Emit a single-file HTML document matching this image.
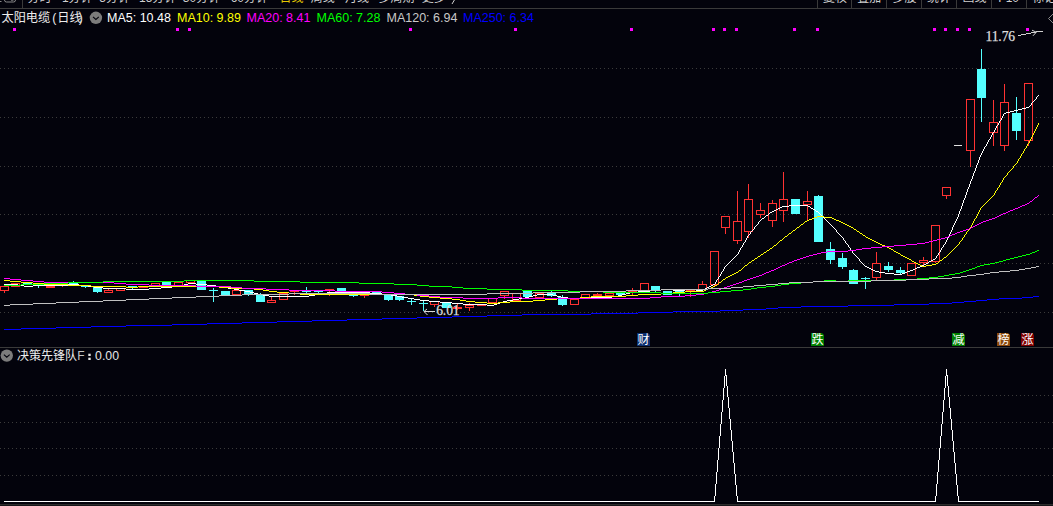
<!DOCTYPE html><html><head><meta charset="utf-8"><title>chart</title><style>
html,body{margin:0;padding:0;background:#03030c;}body{width:1053px;height:506px;overflow:hidden;position:relative;font-family:"Liberation Sans",sans-serif;}
svg{position:absolute;left:0;top:0;display:block}
.t{font-family:"Liberation Sans",sans-serif;font-size:12.5px}
.s{font-family:"Liberation Serif",serif;font-size:13.6px;fill:#dedede;stroke:#dedede;stroke-width:0.25px;letter-spacing:-0.12px}
.c{font-family:"Liberation Sans","Noto Sans CJK SC",sans-serif;font-size:12px}
</style></head><body>
<svg width="1053" height="506" viewBox="0 0 1053 506">
<rect width="1053" height="506" fill="#03030c"/>
<g stroke="#3b3b3b" stroke-width="1" stroke-dasharray="1 3" shape-rendering="crispEdges">
<line x1="0" y1="68.5" x2="1053" y2="68.5"/>
<line x1="0" y1="117.5" x2="1053" y2="117.5"/>
<line x1="0" y1="166.5" x2="1053" y2="166.5"/>
<line x1="0" y1="214.5" x2="1053" y2="214.5"/>
<line x1="0" y1="263.5" x2="1053" y2="263.5"/>
<line x1="0" y1="312.5" x2="1053" y2="312.5"/>
<line x1="0" y1="395.5" x2="1053" y2="395.5"/>
<line x1="0" y1="422.5" x2="1053" y2="422.5"/>
<line x1="0" y1="448.5" x2="1053" y2="448.5"/>
<line x1="0" y1="475.5" x2="1053" y2="475.5"/>
</g>
<g shape-rendering="crispEdges">
<rect x="0" y="8" width="1053" height="1" fill="#3a3a3a"/>
<rect x="0" y="347" width="1053" height="1" fill="#3a3a3a"/>
<rect x="0" y="504" width="1053" height="1" fill="#2c2c2c"/>
<rect x="0" y="505" width="1053" height="1" fill="#17171a"/>
<rect x="22" y="0" width="1" height="8" fill="#3a3a3a"/>
<rect x="817" y="0" width="1" height="8" fill="#3a3a3a"/>
<rect x="851" y="0" width="1" height="8" fill="#3a3a3a"/>
<rect x="886" y="0" width="1" height="8" fill="#3a3a3a"/>
<rect x="921" y="0" width="1" height="8" fill="#3a3a3a"/>
<rect x="956" y="0" width="1" height="8" fill="#3a3a3a"/>
<rect x="991" y="0" width="1" height="8" fill="#3a3a3a"/>
<rect x="1026" y="0" width="1" height="8" fill="#3a3a3a"/>
</g>
<g shape-rendering="crispEdges">
<rect x="4" y="291" width="1" height="2" fill="#ff3232"/>
<rect x="0.5" y="286.5" width="8" height="4" fill="none" stroke="#ff3232" stroke-width="1"/>
<rect x="11.5" y="283.5" width="8" height="3" fill="none" stroke="#ff3232" stroke-width="1"/>
<rect x="23" y="283" width="9" height="2" fill="#54ffff"/>
<rect x="38" y="286" width="1" height="2" fill="#54ffff"/>
<rect x="34" y="285" width="9" height="1" fill="#54ffff"/>
<rect x="46" y="286" width="9" height="2" fill="#ff3232"/>
<rect x="62" y="286" width="1" height="1" fill="#ff3232"/>
<rect x="58" y="284" width="9" height="2" fill="#ff3232"/>
<rect x="73" y="281" width="1" height="2" fill="#54ffff"/>
<rect x="69" y="283" width="9" height="2" fill="#54ffff"/>
<rect x="85" y="287" width="1" height="1" fill="#54ffff"/>
<rect x="81" y="285" width="9" height="2" fill="#54ffff"/>
<rect x="97" y="292" width="1" height="1" fill="#54ffff"/>
<rect x="93" y="286" width="9" height="6" fill="#54ffff"/>
<rect x="108" y="289" width="1" height="1" fill="#ff3232"/>
<rect x="104.5" y="290.5" width="8" height="2" fill="none" stroke="#ff3232" stroke-width="1"/>
<rect x="116.5" y="288.5" width="8" height="2" fill="none" stroke="#ff3232" stroke-width="1"/>
<rect x="132" y="287" width="1" height="2" fill="#54ffff"/>
<rect x="128" y="286" width="9" height="1" fill="#54ffff"/>
<rect x="139" y="286" width="9" height="2" fill="#ff3232"/>
<rect x="151.5" y="283.5" width="8" height="2" fill="none" stroke="#ff3232" stroke-width="1"/>
<rect x="166" y="285" width="1" height="3" fill="#54ffff"/>
<rect x="162" y="282" width="9" height="3" fill="#54ffff"/>
<rect x="174.5" y="282.5" width="8" height="3" fill="none" stroke="#ff3232" stroke-width="1"/>
<rect x="186.5" y="280.5" width="8" height="2" fill="none" stroke="#ff3232" stroke-width="1"/>
<rect x="197" y="281" width="9" height="9" fill="#54ffff"/>
<rect x="213" y="288" width="1" height="2" fill="#54ffff"/>
<rect x="213" y="291" width="1" height="11" fill="#54ffff"/>
<rect x="209" y="290" width="9" height="1" fill="#54ffff"/>
<rect x="221" y="291" width="9" height="4" fill="#54ffff"/>
<rect x="232.5" y="290.5" width="8" height="4" fill="none" stroke="#ff3232" stroke-width="1"/>
<rect x="248" y="294" width="1" height="2" fill="#54ffff"/>
<rect x="244" y="290" width="9" height="4" fill="#54ffff"/>
<rect x="260" y="293" width="1" height="1" fill="#54ffff"/>
<rect x="256" y="294" width="9" height="8" fill="#54ffff"/>
<rect x="271" y="297" width="1" height="3" fill="#ff3232"/>
<rect x="267.5" y="300.5" width="8" height="2" fill="none" stroke="#ff3232" stroke-width="1"/>
<rect x="279.5" y="293.5" width="8" height="6" fill="none" stroke="#ff3232" stroke-width="1"/>
<rect x="294" y="292" width="1" height="3" fill="#ff3232"/>
<rect x="290" y="291" width="9" height="1" fill="#ff3232"/>
<rect x="306" y="287" width="1" height="4" fill="#54ffff"/>
<rect x="306" y="292" width="1" height="1" fill="#54ffff"/>
<rect x="302" y="291" width="9" height="1" fill="#54ffff"/>
<rect x="318" y="292" width="1" height="1" fill="#54ffff"/>
<rect x="314" y="291" width="9" height="1" fill="#54ffff"/>
<rect x="329" y="291" width="1" height="5" fill="#ff3232"/>
<rect x="325" y="289" width="9" height="2" fill="#ff3232"/>
<rect x="337" y="288" width="9" height="3" fill="#54ffff"/>
<rect x="353" y="296" width="1" height="1" fill="#54ffff"/>
<rect x="349" y="293" width="9" height="3" fill="#54ffff"/>
<rect x="364" y="296" width="1" height="2" fill="#ff3232"/>
<rect x="360" y="294" width="9" height="2" fill="#ff3232"/>
<rect x="376" y="291" width="1" height="1" fill="#54ffff"/>
<rect x="372" y="292" width="9" height="1" fill="#54ffff"/>
<rect x="388" y="300" width="1" height="1" fill="#54ffff"/>
<rect x="384" y="295" width="9" height="5" fill="#54ffff"/>
<rect x="399" y="300" width="1" height="1" fill="#54ffff"/>
<rect x="395" y="296" width="9" height="4" fill="#54ffff"/>
<rect x="411" y="299" width="1" height="2" fill="#54ffff"/>
<rect x="411" y="302" width="1" height="3" fill="#54ffff"/>
<rect x="407" y="301" width="9" height="1" fill="#54ffff"/>
<rect x="423" y="301" width="1" height="2" fill="#54ffff"/>
<rect x="423" y="304" width="1" height="7" fill="#54ffff"/>
<rect x="419" y="303" width="9" height="1" fill="#54ffff"/>
<rect x="434" y="305" width="1" height="2" fill="#ff3232"/>
<rect x="430.5" y="301.5" width="8" height="3" fill="none" stroke="#ff3232" stroke-width="1"/>
<rect x="442" y="302" width="9" height="6" fill="#54ffff"/>
<rect x="457" y="303" width="1" height="4" fill="#ff3232"/>
<rect x="457" y="309" width="1" height="1" fill="#ff3232"/>
<rect x="453" y="307" width="9" height="2" fill="#ff3232"/>
<rect x="469" y="303" width="1" height="2" fill="#ff3232"/>
<rect x="469" y="308" width="1" height="3" fill="#ff3232"/>
<rect x="465.5" y="305.5" width="8" height="2" fill="none" stroke="#ff3232" stroke-width="1"/>
<rect x="477" y="304" width="9" height="2" fill="#ff3232"/>
<rect x="488.5" y="298.5" width="8" height="4" fill="none" stroke="#ff3232" stroke-width="1"/>
<rect x="504" y="296" width="1" height="3" fill="#ff3232"/>
<rect x="500.5" y="291.5" width="8" height="4" fill="none" stroke="#ff3232" stroke-width="1"/>
<rect x="512.5" y="293.5" width="8" height="7" fill="none" stroke="#ff3232" stroke-width="1"/>
<rect x="523" y="291" width="9" height="6" fill="#54ffff"/>
<rect x="535.5" y="293.5" width="8" height="4" fill="none" stroke="#ff3232" stroke-width="1"/>
<rect x="551" y="291" width="1" height="2" fill="#54ffff"/>
<rect x="551" y="296" width="1" height="1" fill="#54ffff"/>
<rect x="547" y="293" width="9" height="3" fill="#54ffff"/>
<rect x="562" y="295" width="1" height="2" fill="#54ffff"/>
<rect x="562" y="305" width="1" height="1" fill="#54ffff"/>
<rect x="558" y="297" width="9" height="8" fill="#54ffff"/>
<rect x="570.5" y="299.5" width="8" height="5" fill="none" stroke="#ff3232" stroke-width="1"/>
<rect x="581.5" y="294.5" width="8" height="3" fill="none" stroke="#ff3232" stroke-width="1"/>
<rect x="597" y="293" width="1" height="1" fill="#ff3232"/>
<rect x="593" y="294" width="9" height="2" fill="#ff3232"/>
<rect x="605.5" y="293.5" width="8" height="2" fill="none" stroke="#ff3232" stroke-width="1"/>
<rect x="616" y="293" width="9" height="2" fill="#54ffff"/>
<rect x="632" y="288" width="1" height="3" fill="#ff3232"/>
<rect x="632" y="293" width="1" height="2" fill="#ff3232"/>
<rect x="628" y="291" width="9" height="2" fill="#ff3232"/>
<rect x="640.5" y="283.5" width="8" height="7" fill="none" stroke="#ff3232" stroke-width="1"/>
<rect x="655" y="290" width="1" height="2" fill="#54ffff"/>
<rect x="651" y="286" width="9" height="4" fill="#54ffff"/>
<rect x="663" y="291" width="9" height="4" fill="#54ffff"/>
<rect x="679" y="292" width="1" height="4" fill="#54ffff"/>
<rect x="675" y="291" width="9" height="1" fill="#54ffff"/>
<rect x="690" y="292" width="1" height="5" fill="#ff3232"/>
<rect x="686" y="290" width="9" height="2" fill="#ff3232"/>
<rect x="702" y="281" width="1" height="3" fill="#ff3232"/>
<rect x="698.5" y="284.5" width="8" height="5" fill="none" stroke="#ff3232" stroke-width="1"/>
<rect x="714" y="285" width="1" height="1" fill="#ff3232"/>
<rect x="710.5" y="251.5" width="8" height="33" fill="none" stroke="#ff3232" stroke-width="1"/>
<rect x="725" y="228" width="1" height="6" fill="#ff3232"/>
<rect x="721.5" y="216.5" width="8" height="11" fill="none" stroke="#ff3232" stroke-width="1"/>
<rect x="737" y="191" width="1" height="30" fill="#ff3232"/>
<rect x="737" y="241" width="1" height="3" fill="#ff3232"/>
<rect x="733.5" y="221.5" width="8" height="19" fill="none" stroke="#ff3232" stroke-width="1"/>
<rect x="748" y="184" width="1" height="15" fill="#ff3232"/>
<rect x="748" y="232" width="1" height="6" fill="#ff3232"/>
<rect x="744.5" y="199.5" width="8" height="32" fill="none" stroke="#ff3232" stroke-width="1"/>
<rect x="760" y="203" width="1" height="7" fill="#ff3232"/>
<rect x="760" y="215" width="1" height="3" fill="#ff3232"/>
<rect x="756.5" y="210.5" width="8" height="4" fill="none" stroke="#ff3232" stroke-width="1"/>
<rect x="772" y="200" width="1" height="3" fill="#ff3232"/>
<rect x="772" y="221" width="1" height="6" fill="#ff3232"/>
<rect x="768.5" y="203.5" width="8" height="17" fill="none" stroke="#ff3232" stroke-width="1"/>
<rect x="783" y="172" width="1" height="27" fill="#ff3232"/>
<rect x="783" y="211" width="1" height="11" fill="#ff3232"/>
<rect x="779.5" y="199.5" width="8" height="11" fill="none" stroke="#ff3232" stroke-width="1"/>
<rect x="791" y="199" width="9" height="15" fill="#54ffff"/>
<rect x="807" y="191" width="1" height="10" fill="#ff3232"/>
<rect x="807" y="205" width="1" height="15" fill="#ff3232"/>
<rect x="803.5" y="201.5" width="8" height="3" fill="none" stroke="#ff3232" stroke-width="1"/>
<rect x="818" y="195" width="1" height="1" fill="#54ffff"/>
<rect x="814" y="196" width="9" height="46" fill="#54ffff"/>
<rect x="830" y="242" width="1" height="7" fill="#54ffff"/>
<rect x="830" y="260" width="1" height="4" fill="#54ffff"/>
<rect x="826" y="249" width="9" height="11" fill="#54ffff"/>
<rect x="842" y="253" width="1" height="5" fill="#54ffff"/>
<rect x="842" y="267" width="1" height="2" fill="#54ffff"/>
<rect x="838" y="258" width="9" height="9" fill="#54ffff"/>
<rect x="853" y="269" width="1" height="1" fill="#54ffff"/>
<rect x="849" y="270" width="9" height="14" fill="#54ffff"/>
<rect x="865" y="277" width="1" height="1" fill="#54ffff"/>
<rect x="865" y="279" width="1" height="10" fill="#54ffff"/>
<rect x="861" y="278" width="9" height="1" fill="#54ffff"/>
<rect x="876" y="252" width="1" height="11" fill="#ff3232"/>
<rect x="876" y="278" width="1" height="2" fill="#ff3232"/>
<rect x="872.5" y="263.5" width="8" height="14" fill="none" stroke="#ff3232" stroke-width="1"/>
<rect x="888" y="262" width="1" height="4" fill="#54ffff"/>
<rect x="888" y="270" width="1" height="2" fill="#54ffff"/>
<rect x="884" y="266" width="9" height="4" fill="#54ffff"/>
<rect x="900" y="267" width="1" height="3" fill="#54ffff"/>
<rect x="900" y="273" width="1" height="1" fill="#54ffff"/>
<rect x="896" y="270" width="9" height="3" fill="#54ffff"/>
<rect x="907.5" y="263.5" width="8" height="12" fill="none" stroke="#ff3232" stroke-width="1"/>
<rect x="923" y="257" width="1" height="3" fill="#ff3232"/>
<rect x="923" y="263" width="1" height="2" fill="#ff3232"/>
<rect x="919.5" y="260.5" width="8" height="2" fill="none" stroke="#ff3232" stroke-width="1"/>
<rect x="935" y="262" width="1" height="1" fill="#ff3232"/>
<rect x="931.5" y="225.5" width="8" height="36" fill="none" stroke="#ff3232" stroke-width="1"/>
<rect x="946" y="196" width="1" height="3" fill="#ff3232"/>
<rect x="942.5" y="187.5" width="8" height="8" fill="none" stroke="#ff3232" stroke-width="1"/>
<rect x="954" y="145" width="8" height="1" fill="#e0e0e0"/>
<rect x="970" y="151" width="1" height="16" fill="#ff3232"/>
<rect x="966.5" y="99.5" width="8" height="51" fill="none" stroke="#ff3232" stroke-width="1"/>
<rect x="981" y="49" width="1" height="20" fill="#54ffff"/>
<rect x="981" y="98" width="1" height="24" fill="#54ffff"/>
<rect x="977" y="69" width="9" height="29" fill="#54ffff"/>
<rect x="993" y="100" width="1" height="22" fill="#ff3232"/>
<rect x="993" y="133" width="1" height="13" fill="#ff3232"/>
<rect x="989.5" y="122.5" width="8" height="10" fill="none" stroke="#ff3232" stroke-width="1"/>
<rect x="1004" y="84" width="1" height="18" fill="#ff3232"/>
<rect x="1004" y="146" width="1" height="5" fill="#ff3232"/>
<rect x="1000.5" y="102.5" width="8" height="43" fill="none" stroke="#ff3232" stroke-width="1"/>
<rect x="1016" y="97" width="1" height="16" fill="#54ffff"/>
<rect x="1016" y="131" width="1" height="9" fill="#54ffff"/>
<rect x="1012" y="113" width="9" height="18" fill="#54ffff"/>
<rect x="1028" y="141" width="1" height="5" fill="#ff3232"/>
<rect x="1024.5" y="83.5" width="8" height="57" fill="none" stroke="#ff3232" stroke-width="1"/>
</g>
<path fill="none" stroke="#ffffff" stroke-width="1" shape-rendering="crispEdges" d="M1038 95.5h1M1037 96.5h1M1036 97.5h1M1036 98.5h1M1035 99.5h1M1034 100.5h1M1033 101.5h1M1032 102.5h1M1031 103.5h1M1031 104.5h1M1030 105.5h1M1029 106.5h1M1026 107.5h3M1022 108.5h4M1018 109.5h4M1014 110.5h4M1010 111.5h4M1006 112.5h4M1004 113.5h2M1003 114.5h1M1003 115.5h1M1002 116.5h1M1002 117.5h1M1001 118.5h1M1001 119.5h1M1000 120.5h1M999 121.5h1M999 122.5h1M998 123.5h1M998 124.5h1M997 125.5h1M996 126.5h1M996 127.5h1M995 128.5h1M995 129.5h1M994 130.5h1M994 131.5h1M993 132.5h1M992 133.5h1M992 134.5h1M991 135.5h1M991 136.5h1M990 137.5h1M990 138.5h1M989 139.5h1M988 140.5h1M988 141.5h1M987 142.5h1M987 143.5h1M986 144.5h1M986 145.5h1M985 146.5h1M984 147.5h1M984 148.5h1M983 149.5h1M983 150.5h1M982 151.5h1M982 152.5h1M981 153.5h1M981 154.5h1M980 155.5h1M980 156.5h1M979 157.5h1M979 158.5h1M979 159.5h1M978 160.5h1M978 161.5h1M978 162.5h1M977 163.5h1M977 164.5h1M976 165.5h1M976 166.5h1M976 167.5h1M975 168.5h1M975 169.5h1M975 170.5h1M974 171.5h1M974 172.5h1M973 173.5h1M973 174.5h1M973 175.5h1M972 176.5h1M972 177.5h1M972 178.5h1M971 179.5h1M971 180.5h1M970 181.5h1M970 182.5h1M970 183.5h1M969 184.5h1M969 185.5h1M969 186.5h1M968 187.5h1M968 188.5h1M967 189.5h1M967 190.5h1M967 191.5h1M966 192.5h1M966 193.5h1M966 194.5h1M965 195.5h1M965 196.5h1M965 197.5h1M964 198.5h1M964 199.5h1M963 200.5h1M963 201.5h1M963 202.5h1M962 203.5h1M962 204.5h1M789 205.5h19M962 205.5h1M782 206.5h7M808 206.5h2M961 206.5h1M780 207.5h2M810 207.5h1M961 207.5h1M778 208.5h2M811 208.5h2M961 208.5h1M776 209.5h2M813 209.5h2M960 209.5h1M774 210.5h2M815 210.5h1M960 210.5h1M772 211.5h2M816 211.5h2M959 211.5h1M770 212.5h2M818 212.5h1M959 212.5h1M769 213.5h1M819 213.5h1M959 213.5h1M768 214.5h1M820 214.5h1M958 214.5h1M766 215.5h2M821 215.5h1M958 215.5h1M765 216.5h1M822 216.5h1M958 216.5h1M764 217.5h1M823 217.5h1M957 217.5h1M762 218.5h2M824 218.5h1M957 218.5h1M761 219.5h1M825 219.5h1M956 219.5h1M760 220.5h1M826 220.5h1M956 220.5h1M759 221.5h1M827 221.5h1M955 221.5h1M758 222.5h1M828 222.5h1M955 222.5h1M758 223.5h1M829 223.5h1M954 223.5h1M757 224.5h1M830 224.5h1M954 224.5h1M756 225.5h1M831 225.5h1M953 225.5h1M755 226.5h1M832 226.5h1M953 226.5h1M754 227.5h1M833 227.5h1M952 227.5h1M754 228.5h1M834 228.5h1M952 228.5h1M753 229.5h1M835 229.5h1M952 229.5h1M752 230.5h1M836 230.5h1M951 230.5h1M751 231.5h1M836 231.5h1M951 231.5h1M750 232.5h1M837 232.5h1M950 232.5h1M750 233.5h1M838 233.5h1M950 233.5h1M749 234.5h1M839 234.5h1M949 234.5h1M748 235.5h1M840 235.5h1M949 235.5h1M747 236.5h1M841 236.5h1M948 236.5h1M747 237.5h1M842 237.5h1M948 237.5h1M746 238.5h1M843 238.5h1M947 238.5h1M746 239.5h1M843 239.5h1M947 239.5h1M745 240.5h1M844 240.5h1M946 240.5h1M745 241.5h1M845 241.5h1M946 241.5h1M744 242.5h1M845 242.5h1M945 242.5h1M743 243.5h1M846 243.5h1M945 243.5h1M743 244.5h1M847 244.5h1M944 244.5h1M742 245.5h1M848 245.5h1M943 245.5h1M742 246.5h1M848 246.5h1M943 246.5h1M741 247.5h1M849 247.5h1M942 247.5h1M740 248.5h1M850 248.5h1M941 248.5h1M740 249.5h1M850 249.5h1M941 249.5h1M739 250.5h1M851 250.5h1M940 250.5h1M739 251.5h1M852 251.5h1M940 251.5h1M738 252.5h1M852 252.5h1M939 252.5h1M738 253.5h1M853 253.5h1M938 253.5h1M737 254.5h1M854 254.5h1M938 254.5h1M736 255.5h1M855 255.5h1M937 255.5h1M735 256.5h1M856 256.5h1M936 256.5h1M734 257.5h1M857 257.5h1M936 257.5h1M733 258.5h1M858 258.5h1M935 258.5h1M732 259.5h1M859 259.5h1M933 259.5h2M731 260.5h1M859 260.5h1M931 260.5h2M730 261.5h1M860 261.5h1M929 261.5h2M729 262.5h1M861 262.5h1M928 262.5h1M728 263.5h1M862 263.5h1M926 263.5h2M727 264.5h1M863 264.5h1M924 264.5h2M726 265.5h1M864 265.5h1M922 265.5h2M725 266.5h1M865 266.5h2M920 266.5h2M724 267.5h1M867 267.5h2M917 267.5h3M724 268.5h1M869 268.5h2M915 268.5h2M723 269.5h1M871 269.5h2M913 269.5h2M723 270.5h1M873 270.5h2M910 270.5h3M722 271.5h1M875 271.5h4M907 271.5h3M721 272.5h1M879 272.5h6M905 272.5h2M721 273.5h1M885 273.5h9M902 273.5h3M720 274.5h1M894 274.5h8M720 275.5h1M719 276.5h1M718 277.5h1M718 278.5h1M717 279.5h1M716 280.5h1M716 281.5h1M715 282.5h1M188 283.5h8M715 283.5h1M4 284.5h14M68 284.5h11M184 284.5h4M196 284.5h11M713 284.5h2M18 285.5h6M33 285.5h35M79 285.5h9M180 285.5h4M207 285.5h9M711 285.5h2M24 286.5h9M88 286.5h6M172 286.5h8M216 286.5h6M709 286.5h2M94 287.5h9M161 287.5h11M222 287.5h6M707 287.5h2M103 288.5h23M149 288.5h12M228 288.5h6M705 288.5h2M126 289.5h23M234 289.5h5M661 289.5h12M703 289.5h2M239 290.5h6M650 290.5h11M673 290.5h12M696 290.5h7M245 291.5h5M638 291.5h12M685 291.5h11M250 292.5h4M327 292.5h43M630 292.5h8M254 293.5h4M321 293.5h6M370 293.5h12M626 293.5h4M258 294.5h5M315 294.5h6M382 294.5h9M537 294.5h16M622 294.5h4M263 295.5h6M309 295.5h6M391 295.5h6M533 295.5h4M553 295.5h4M618 295.5h4M269 296.5h40M397 296.5h5M529 296.5h4M557 296.5h4M612 296.5h6M402 297.5h6M525 297.5h4M561 297.5h7M591 297.5h21M408 298.5h6M519 298.5h6M568 298.5h23M414 299.5h6M513 299.5h6M420 300.5h9M507 300.5h6M429 301.5h11M503 301.5h4M440 302.5h12M500 302.5h3M452 303.5h11M497 303.5h3M463 304.5h24M494 304.5h3M487 305.5h7"/>
<path fill="none" stroke="#ffff00" stroke-width="1" shape-rendering="crispEdges" d="M1038 123.5h1M1038 124.5h1M1037 125.5h1M1037 126.5h1M1036 127.5h1M1036 128.5h1M1035 129.5h1M1035 130.5h1M1034 131.5h1M1034 132.5h1M1033 133.5h1M1033 134.5h1M1032 135.5h1M1032 136.5h1M1031 137.5h1M1031 138.5h1M1030 139.5h1M1030 140.5h1M1029 141.5h1M1029 142.5h1M1028 143.5h1M1027 144.5h1M1027 145.5h1M1026 146.5h1M1026 147.5h1M1025 148.5h1M1024 149.5h1M1024 150.5h1M1023 151.5h1M1023 152.5h1M1022 153.5h1M1021 154.5h1M1021 155.5h1M1020 156.5h1M1020 157.5h1M1019 158.5h1M1018 159.5h1M1018 160.5h1M1017 161.5h1M1017 162.5h1M1016 163.5h1M1015 164.5h1M1014 165.5h1M1013 166.5h1M1013 167.5h1M1012 168.5h1M1011 169.5h1M1010 170.5h1M1009 171.5h1M1008 172.5h1M1007 173.5h1M1007 174.5h1M1006 175.5h1M1005 176.5h1M1004 177.5h1M1003 178.5h1M1003 179.5h1M1002 180.5h1M1002 181.5h1M1001 182.5h1M1000 183.5h1M1000 184.5h1M999 185.5h1M999 186.5h1M998 187.5h1M997 188.5h1M997 189.5h1M996 190.5h1M995 191.5h1M995 192.5h1M994 193.5h1M994 194.5h1M993 195.5h1M992 196.5h1M991 197.5h1M990 198.5h1M989 199.5h1M988 200.5h1M987 201.5h1M986 202.5h1M985 203.5h1M984 204.5h1M983 205.5h1M982 206.5h1M981 207.5h1M980 208.5h1M980 209.5h1M979 210.5h1M979 211.5h1M978 212.5h1M978 213.5h1M977 214.5h1M977 215.5h1M817 216.5h7M976 216.5h1M814 217.5h3M824 217.5h8M976 217.5h1M812 218.5h2M832 218.5h2M975 218.5h1M809 219.5h3M834 219.5h2M974 219.5h1M807 220.5h2M836 220.5h3M974 220.5h1M805 221.5h2M839 221.5h2M973 221.5h1M804 222.5h1M841 222.5h2M973 222.5h1M803 223.5h1M843 223.5h2M972 223.5h1M801 224.5h2M845 224.5h2M972 224.5h1M800 225.5h1M847 225.5h2M971 225.5h1M799 226.5h1M849 226.5h2M971 226.5h1M797 227.5h2M851 227.5h2M970 227.5h1M796 228.5h1M853 228.5h1M969 228.5h1M795 229.5h1M854 229.5h2M969 229.5h1M793 230.5h2M856 230.5h1M968 230.5h1M792 231.5h1M857 231.5h2M967 231.5h1M791 232.5h1M859 232.5h1M966 232.5h1M789 233.5h2M860 233.5h2M966 233.5h1M788 234.5h1M862 234.5h1M965 234.5h1M787 235.5h1M863 235.5h2M964 235.5h1M785 236.5h2M865 236.5h1M964 236.5h1M784 237.5h1M866 237.5h2M963 237.5h1M783 238.5h1M868 238.5h2M962 238.5h1M782 239.5h1M870 239.5h2M962 239.5h1M780 240.5h2M872 240.5h2M961 240.5h1M779 241.5h1M874 241.5h2M960 241.5h1M778 242.5h1M876 242.5h2M959 242.5h1M777 243.5h1M878 243.5h2M959 243.5h1M776 244.5h1M880 244.5h2M958 244.5h1M774 245.5h2M882 245.5h3M957 245.5h1M773 246.5h1M885 246.5h2M956 246.5h1M772 247.5h1M887 247.5h2M955 247.5h1M770 248.5h2M889 248.5h2M954 248.5h1M769 249.5h1M891 249.5h2M953 249.5h1M767 250.5h2M893 250.5h1M952 250.5h1M766 251.5h1M894 251.5h2M951 251.5h1M764 252.5h2M896 252.5h2M950 252.5h1M763 253.5h1M898 253.5h2M949 253.5h1M761 254.5h2M900 254.5h1M948 254.5h1M760 255.5h1M901 255.5h2M947 255.5h1M758 256.5h2M903 256.5h2M946 256.5h1M757 257.5h1M905 257.5h2M944 257.5h2M755 258.5h2M907 258.5h2M943 258.5h1M754 259.5h1M909 259.5h2M942 259.5h1M752 260.5h2M911 260.5h1M940 260.5h2M751 261.5h1M912 261.5h2M939 261.5h1M749 262.5h2M914 262.5h2M938 262.5h1M748 263.5h1M916 263.5h2M936 263.5h2M747 264.5h1M918 264.5h2M932 264.5h4M745 265.5h2M920 265.5h2M926 265.5h6M744 266.5h1M922 266.5h4M743 267.5h1M742 268.5h1M741 269.5h1M739 270.5h2M738 271.5h1M736 272.5h2M734 273.5h2M732 274.5h2M730 275.5h2M728 276.5h2M726 277.5h2M725 278.5h1M723 279.5h2M4 280.5h6M722 280.5h1M10 281.5h11M721 281.5h1M21 282.5h12M719 282.5h2M33 283.5h11M718 283.5h1M44 284.5h24M717 284.5h1M68 285.5h23M715 285.5h2M91 286.5h35M138 286.5h81M713 286.5h2M126 287.5h12M219 287.5h12M711 287.5h2M231 288.5h23M708 288.5h3M254 289.5h9M706 289.5h2M263 290.5h6M704 290.5h2M269 291.5h8M685 291.5h19M277 292.5h12M673 292.5h12M289 293.5h11M661 293.5h12M300 294.5h114M638 294.5h23M414 295.5h6M626 295.5h12M420 296.5h9M591 296.5h35M429 297.5h11M580 297.5h11M440 298.5h12M557 298.5h23M452 299.5h8M545 299.5h12M460 300.5h6M533 300.5h12M466 301.5h9M510 301.5h23M475 302.5h12M498 302.5h12M487 303.5h11"/>
<path fill="none" stroke="#ff00ff" stroke-width="1" shape-rendering="crispEdges" d="M1038 195.5h1M1037 196.5h1M1035 197.5h2M1034 198.5h1M1033 199.5h1M1032 200.5h1M1030 201.5h2M1029 202.5h1M1027 203.5h2M1025 204.5h2M1022 205.5h3M1020 206.5h2M1018 207.5h2M1015 208.5h3M1013 209.5h2M1010 210.5h3M1008 211.5h2M1006 212.5h2M1003 213.5h3M1001 214.5h2M999 215.5h2M997 216.5h2M995 217.5h2M992 218.5h3M989 219.5h3M986 220.5h3M983 221.5h3M981 222.5h2M979 223.5h2M977 224.5h2M975 225.5h2M973 226.5h2M971 227.5h2M969 228.5h2M966 229.5h3M963 230.5h3M960 231.5h3M957 232.5h3M955 233.5h2M952 234.5h3M950 235.5h2M948 236.5h2M945 237.5h3M941 238.5h4M937 239.5h4M933 240.5h4M929 241.5h4M925 242.5h4M917 243.5h8M906 244.5h11M894 245.5h12M882 246.5h12M871 247.5h11M862 248.5h9M856 249.5h6M848 250.5h8M827 251.5h21M821 252.5h6M817 253.5h4M813 254.5h4M809 255.5h4M806 256.5h3M803 257.5h3M800 258.5h3M797 259.5h3M794 260.5h3M792 261.5h2M789 262.5h3M787 263.5h2M785 264.5h2M782 265.5h3M780 266.5h2M778 267.5h2M776 268.5h2M774 269.5h2M771 270.5h3M769 271.5h2M766 272.5h3M764 273.5h2M762 274.5h2M759 275.5h3M756 276.5h3M753 277.5h3M4 278.5h6M750 278.5h3M10 279.5h11M747 279.5h3M21 280.5h12M744 280.5h3M33 281.5h11M742 281.5h2M44 282.5h70M739 282.5h3M114 283.5h12M736 283.5h3M126 284.5h23M733 284.5h3M149 285.5h47M730 285.5h3M196 286.5h35M727 286.5h3M231 287.5h11M724 287.5h3M242 288.5h24M721 288.5h3M266 289.5h23M719 289.5h2M289 290.5h46M716 290.5h3M335 291.5h47M712 291.5h4M382 292.5h12M708 292.5h4M394 293.5h11M704 293.5h4M405 294.5h12M696 294.5h8M417 295.5h12M685 295.5h11M429 296.5h11M661 296.5h24M440 297.5h23M498 297.5h24M650 297.5h11M463 298.5h35M522 298.5h128"/>
<path fill="none" stroke="#00ff00" stroke-width="1" shape-rendering="crispEdges" d="M1037 250.5h2M1035 251.5h2M1032 252.5h3M1030 253.5h2M1026 254.5h4M1022 255.5h4M1018 256.5h4M1014 257.5h4M1010 258.5h4M1006 259.5h4M1003 260.5h3M999 261.5h4M995 262.5h4M990 263.5h5M984 264.5h6M980 265.5h4M977 266.5h3M975 267.5h2M972 268.5h3M969 269.5h3M966 270.5h3M963 271.5h3M960 272.5h3M955 273.5h5M949 274.5h6M944 275.5h5M938 276.5h6M929 277.5h9M917 278.5h12M894 279.5h23M184 280.5h70M824 280.5h12M848 280.5h46M103 281.5h81M254 281.5h46M813 281.5h11M836 281.5h12M68 282.5h35M300 282.5h59M801 282.5h12M44 283.5h24M359 283.5h35M789 283.5h12M21 284.5h23M394 284.5h23M781 284.5h8M4 285.5h17M417 285.5h12M775 285.5h6M429 286.5h23M766 286.5h9M452 287.5h11M757 287.5h9M463 288.5h24M751 288.5h6M487 289.5h35M743 289.5h8M522 290.5h46M731 290.5h12M568 291.5h35M720 291.5h11M603 292.5h58M708 292.5h12M661 293.5h47"/>
<path fill="none" stroke="#c0c0c0" stroke-width="1" shape-rendering="crispEdges" d="M1036 266.5h3M1031 267.5h5M1025 268.5h6M1019 269.5h6M1010 270.5h9M999 271.5h11M990 272.5h9M984 273.5h6M976 274.5h8M967 275.5h9M961 276.5h6M952 277.5h9M929 278.5h23M906 279.5h23M871 280.5h35M813 281.5h58M789 282.5h24M778 283.5h11M766 284.5h12M754 285.5h12M743 286.5h11M731 287.5h12M708 288.5h23M661 289.5h47M626 290.5h35M580 291.5h46M533 292.5h47M289 293.5h81M487 293.5h46M242 294.5h47M370 294.5h117M219 295.5h23M196 296.5h23M172 297.5h24M149 298.5h23M126 299.5h23M103 300.5h23M79 301.5h24M56 302.5h23M33 303.5h23M10 304.5h23M4 305.5h6"/>
<path fill="none" stroke="#0000ff" stroke-width="1" shape-rendering="crispEdges" d="M1033 296.5h6M1022 297.5h11M999 298.5h23M987 299.5h12M976 300.5h11M964 301.5h12M952 302.5h12M929 303.5h23M894 304.5h35M848 305.5h46M801 306.5h47M778 307.5h23M766 308.5h12M743 309.5h23M720 310.5h23M673 311.5h47M638 312.5h35M591 313.5h47M522 314.5h69M487 315.5h35M452 316.5h35M417 317.5h35M382 318.5h35M347 319.5h35M312 320.5h35M277 321.5h35M242 322.5h35M207 323.5h35M172 324.5h35M126 325.5h46M91 326.5h35M56 327.5h35M21 328.5h35M4 329.5h17"/>
<g fill="#ff00ff" shape-rendering="crispEdges">
<rect x="13" y="28" width="3" height="3"/>
<rect x="176" y="28" width="3" height="3"/>
<rect x="188" y="28" width="3" height="3"/>
<rect x="409" y="28" width="3" height="3"/>
<rect x="514" y="28" width="3" height="3"/>
<rect x="630" y="28" width="3" height="3"/>
<rect x="712" y="28" width="3" height="3"/>
<rect x="723" y="28" width="3" height="3"/>
<rect x="735" y="28" width="3" height="3"/>
<rect x="793" y="28" width="3" height="3"/>
<rect x="816" y="28" width="3" height="3"/>
<rect x="933" y="28" width="3" height="3"/>
<rect x="944" y="28" width="3" height="3"/>
<rect x="956" y="28" width="3" height="3"/>
<rect x="968" y="28" width="3" height="3"/>
<rect x="1026" y="28" width="3" height="3"/>
</g>
<path fill="none" stroke="#ffffff" stroke-width="1" shape-rendering="crispEdges" d="M725 369.5h1M946 369.5h1M725 370.5h1M946 370.5h1M725 371.5h1M946 371.5h1M725 372.5h1M946 372.5h1M725 373.5h1M946 373.5h1M725 374.5h1M946 374.5h1M725 375.5h2M946 375.5h2M724 376.5h1M726 376.5h1M945 376.5h1M947 376.5h1M724 377.5h1M726 377.5h1M945 377.5h1M947 377.5h1M724 378.5h1M726 378.5h1M945 378.5h1M947 378.5h1M724 379.5h1M726 379.5h1M945 379.5h1M947 379.5h1M724 380.5h1M726 380.5h1M945 380.5h1M947 380.5h1M724 381.5h1M726 381.5h1M945 381.5h1M947 381.5h1M724 382.5h1M726 382.5h1M945 382.5h1M947 382.5h1M724 383.5h1M726 383.5h1M945 383.5h1M947 383.5h1M724 384.5h1M726 384.5h1M945 384.5h1M947 384.5h1M724 385.5h1M726 385.5h1M945 385.5h1M947 385.5h1M724 386.5h1M727 386.5h1M945 386.5h1M948 386.5h1M724 387.5h1M727 387.5h1M945 387.5h1M948 387.5h1M723 388.5h1M727 388.5h1M944 388.5h1M948 388.5h1M723 389.5h1M727 389.5h1M944 389.5h1M948 389.5h1M723 390.5h1M727 390.5h1M944 390.5h1M948 390.5h1M723 391.5h1M727 391.5h1M944 391.5h1M948 391.5h1M723 392.5h1M727 392.5h1M944 392.5h1M948 392.5h1M723 393.5h1M727 393.5h1M944 393.5h1M948 393.5h1M723 394.5h1M727 394.5h1M944 394.5h1M948 394.5h1M723 395.5h1M727 395.5h1M944 395.5h1M948 395.5h1M723 396.5h1M727 396.5h1M944 396.5h1M948 396.5h1M723 397.5h1M728 397.5h1M944 397.5h1M949 397.5h1M723 398.5h1M728 398.5h1M944 398.5h1M949 398.5h1M723 399.5h1M728 399.5h1M944 399.5h1M949 399.5h1M722 400.5h1M728 400.5h1M943 400.5h1M949 400.5h1M722 401.5h1M728 401.5h1M943 401.5h1M949 401.5h1M722 402.5h1M728 402.5h1M943 402.5h1M949 402.5h1M722 403.5h1M728 403.5h1M943 403.5h1M949 403.5h1M722 404.5h1M728 404.5h1M943 404.5h1M949 404.5h1M722 405.5h1M728 405.5h1M943 405.5h1M949 405.5h1M722 406.5h1M728 406.5h1M943 406.5h1M949 406.5h1M722 407.5h1M728 407.5h1M943 407.5h1M949 407.5h1M722 408.5h1M729 408.5h1M943 408.5h1M950 408.5h1M722 409.5h1M729 409.5h1M943 409.5h1M950 409.5h1M722 410.5h1M729 410.5h1M943 410.5h1M950 410.5h1M722 411.5h1M729 411.5h1M943 411.5h1M950 411.5h1M721 412.5h1M729 412.5h1M942 412.5h1M950 412.5h1M721 413.5h1M729 413.5h1M942 413.5h1M950 413.5h1M721 414.5h1M729 414.5h1M942 414.5h1M950 414.5h1M721 415.5h1M729 415.5h1M942 415.5h1M950 415.5h1M721 416.5h1M729 416.5h1M942 416.5h1M950 416.5h1M721 417.5h1M729 417.5h1M942 417.5h1M950 417.5h1M721 418.5h1M729 418.5h1M942 418.5h1M950 418.5h1M721 419.5h1M730 419.5h1M942 419.5h1M951 419.5h1M721 420.5h1M730 420.5h1M942 420.5h1M951 420.5h1M721 421.5h1M730 421.5h1M942 421.5h1M951 421.5h1M721 422.5h1M730 422.5h1M942 422.5h1M951 422.5h1M721 423.5h1M730 423.5h1M942 423.5h1M951 423.5h1M720 424.5h1M730 424.5h1M941 424.5h1M951 424.5h1M720 425.5h1M730 425.5h1M941 425.5h1M951 425.5h1M720 426.5h1M730 426.5h1M941 426.5h1M951 426.5h1M720 427.5h1M730 427.5h1M941 427.5h1M951 427.5h1M720 428.5h1M730 428.5h1M941 428.5h1M951 428.5h1M720 429.5h1M730 429.5h1M941 429.5h1M951 429.5h1M720 430.5h1M731 430.5h1M941 430.5h1M952 430.5h1M720 431.5h1M731 431.5h1M941 431.5h1M952 431.5h1M720 432.5h1M731 432.5h1M941 432.5h1M952 432.5h1M720 433.5h1M731 433.5h1M941 433.5h1M952 433.5h1M720 434.5h1M731 434.5h1M941 434.5h1M952 434.5h1M720 435.5h1M731 435.5h1M941 435.5h1M952 435.5h1M719 436.5h1M731 436.5h1M940 436.5h1M952 436.5h1M719 437.5h1M731 437.5h1M940 437.5h1M952 437.5h1M719 438.5h1M731 438.5h1M940 438.5h1M952 438.5h1M719 439.5h1M731 439.5h1M940 439.5h1M952 439.5h1M719 440.5h1M731 440.5h1M940 440.5h1M952 440.5h1M719 441.5h1M732 441.5h1M940 441.5h1M953 441.5h1M719 442.5h1M732 442.5h1M940 442.5h1M953 442.5h1M719 443.5h1M732 443.5h1M940 443.5h1M953 443.5h1M719 444.5h1M732 444.5h1M940 444.5h1M953 444.5h1M719 445.5h1M732 445.5h1M940 445.5h1M953 445.5h1M719 446.5h1M732 446.5h1M940 446.5h1M953 446.5h1M719 447.5h1M732 447.5h1M940 447.5h1M953 447.5h1M718 448.5h1M732 448.5h1M939 448.5h1M953 448.5h1M718 449.5h1M732 449.5h1M939 449.5h1M953 449.5h1M718 450.5h1M732 450.5h1M939 450.5h1M953 450.5h1M718 451.5h1M732 451.5h1M939 451.5h1M953 451.5h1M718 452.5h1M733 452.5h1M939 452.5h1M954 452.5h1M718 453.5h1M733 453.5h1M939 453.5h1M954 453.5h1M718 454.5h1M733 454.5h1M939 454.5h1M954 454.5h1M718 455.5h1M733 455.5h1M939 455.5h1M954 455.5h1M718 456.5h1M733 456.5h1M939 456.5h1M954 456.5h1M718 457.5h1M733 457.5h1M939 457.5h1M954 457.5h1M718 458.5h1M733 458.5h1M939 458.5h1M954 458.5h1M718 459.5h1M733 459.5h1M939 459.5h1M954 459.5h1M717 460.5h1M733 460.5h1M938 460.5h1M954 460.5h1M717 461.5h1M733 461.5h1M938 461.5h1M954 461.5h1M717 462.5h1M733 462.5h1M938 462.5h1M954 462.5h1M717 463.5h1M734 463.5h1M938 463.5h1M955 463.5h1M717 464.5h1M734 464.5h1M938 464.5h1M955 464.5h1M717 465.5h1M734 465.5h1M938 465.5h1M955 465.5h1M717 466.5h1M734 466.5h1M938 466.5h1M955 466.5h1M717 467.5h1M734 467.5h1M938 467.5h1M955 467.5h1M717 468.5h1M734 468.5h1M938 468.5h1M955 468.5h1M717 469.5h1M734 469.5h1M938 469.5h1M955 469.5h1M717 470.5h1M734 470.5h1M938 470.5h1M955 470.5h1M717 471.5h1M734 471.5h1M938 471.5h1M955 471.5h1M716 472.5h1M734 472.5h1M937 472.5h1M955 472.5h1M716 473.5h1M734 473.5h1M937 473.5h1M955 473.5h1M716 474.5h1M735 474.5h1M937 474.5h1M956 474.5h1M716 475.5h1M735 475.5h1M937 475.5h1M956 475.5h1M716 476.5h1M735 476.5h1M937 476.5h1M956 476.5h1M716 477.5h1M735 477.5h1M937 477.5h1M956 477.5h1M716 478.5h1M735 478.5h1M937 478.5h1M956 478.5h1M716 479.5h1M735 479.5h1M937 479.5h1M956 479.5h1M716 480.5h1M735 480.5h1M937 480.5h1M956 480.5h1M716 481.5h1M735 481.5h1M937 481.5h1M956 481.5h1M716 482.5h1M735 482.5h1M937 482.5h1M956 482.5h1M716 483.5h1M735 483.5h1M937 483.5h1M956 483.5h1M715 484.5h1M735 484.5h1M936 484.5h1M956 484.5h1M715 485.5h1M736 485.5h1M936 485.5h1M957 485.5h1M715 486.5h1M736 486.5h1M936 486.5h1M957 486.5h1M715 487.5h1M736 487.5h1M936 487.5h1M957 487.5h1M715 488.5h1M736 488.5h1M936 488.5h1M957 488.5h1M715 489.5h1M736 489.5h1M936 489.5h1M957 489.5h1M715 490.5h1M736 490.5h1M936 490.5h1M957 490.5h1M715 491.5h1M736 491.5h1M936 491.5h1M957 491.5h1M715 492.5h1M736 492.5h1M936 492.5h1M957 492.5h1M715 493.5h1M736 493.5h1M936 493.5h1M957 493.5h1M715 494.5h1M736 494.5h1M936 494.5h1M957 494.5h1M715 495.5h1M736 495.5h1M936 495.5h1M957 495.5h1M714 496.5h1M737 496.5h1M935 496.5h1M958 496.5h1M714 497.5h1M737 497.5h1M935 497.5h1M958 497.5h1M714 498.5h1M737 498.5h1M935 498.5h1M958 498.5h1M714 499.5h1M737 499.5h1M935 499.5h1M958 499.5h1M714 500.5h1M737 500.5h1M935 500.5h1M958 500.5h1M4 501.5h711M737 501.5h199M958 501.5h81"/>
<text class="s" x="436.2" y="315.2">6.01</text>
<g stroke="#d8d8d8" stroke-width="1" fill="none"><path d="M424 311.5H435M424 311.5l3-2.5M424 311.5l3.5 3.5"/></g>
<text class="s" x="985.5" y="41.3">11.76</text>
<g stroke="#d0d0d0" stroke-width="1" fill="none" shape-rendering="crispEdges"><path d="M1018 35.5h3M1021 34.5h5M1026 33.5h5M1031 32.5h5M1036 31.5h7"/></g>
<g stroke="#d0d0d0" stroke-width="1" fill="none"><path d="M1032 30.2l4.3 2l-3.3 3.6"/></g>
<path d="M1053.5 13.5L1048.5 18.5L1053.5 23.5" stroke="#8a8a8a" stroke-width="1" fill="none"/>
<text class="c" y="22.2" fill="#ececec" style="font-size:12.2px"><tspan x="1.5">太阳电缆</tspan><tspan x="52.3">(</tspan><tspan x="57.3">日线</tspan><tspan x="78.8">)</tspan></text>
<circle cx="95.9" cy="17.8" r="6.2" fill="#7c7c7c"/>
<path d="M93.0 16.9l2.9 2.5l2.9 -2.5" stroke="#03030c" stroke-width="1.1" fill="none"/>
<circle cx="6.8" cy="355.6" r="6.2" fill="#7c7c7c"/>
<path d="M3.9 354.7l2.9 2.5l2.9 -2.5" stroke="#03030c" stroke-width="1.1" fill="none"/>
<text class="t" x="107.0" y="22" fill="#ffffff">MA5: 10.48</text>
<text class="t" x="177.0" y="22" fill="#ffff00">MA10: 9.89</text>
<text class="t" x="246.5" y="22" fill="#ff00ff">MA20: 8.41</text>
<text class="t" x="316.5" y="22" fill="#00ff00">MA60: 7.28</text>
<text class="t" x="386.5" y="22" fill="#c8c8c8">MA120: 6.94</text>
<text class="t" x="463.0" y="22" fill="#0000ff">MA250: 6.34</text>
<text class="c" x="17" y="360.4" fill="#ececec">决策先锋队</text>
<text class="t" x="77.2" y="360.2" fill="#c4c4c4" style="font-size:12px">F</text>
<rect x="88.3" y="353.7" width="2.4" height="2.3" fill="#e6e6e6"/><rect x="88.3" y="357.7" width="2.4" height="2.3" fill="#e6e6e6"/>
<text class="t" x="95.1" y="360.2" fill="#e6e6e6" style="font-size:12.3px">0.00</text>
<path d="M637 333h11l2 2v11h-13z" fill="#0c2f70"/>
<text class="c" x="637.4" y="344.4" fill="#ffffff">财</text>
<path d="M811 333h11l2 2v11h-13z" fill="#008000"/>
<text class="c" x="811.4" y="344.4" fill="#ffffff">跌</text>
<path d="M952 333h11l2 2v11h-13z" fill="#008000"/>
<text class="c" x="952.4" y="344.4" fill="#ffffff">减</text>
<path d="M997 333h11l2 2v11h-13z" fill="#8c4a0c"/>
<text class="c" x="997.4" y="344.4" fill="#ffffff">榜</text>
<path d="M1021 333h11l2 2v11h-13z" fill="#800000"/>
<text class="c" x="1021.4" y="344.4" fill="#ffffff">涨</text>
<clipPath id="tc"><rect x="0" y="0" width="1053" height="8"/></clipPath><g clip-path="url(#tc)">
<text class="c" x="27.5" y="2.2" fill="#d0d0d0">分时</text>
<text class="c" x="61.9" y="2.2" fill="#d0d0d0">1分钟</text>
<text class="c" x="99.3" y="2.2" fill="#d0d0d0">5分钟</text>
<text class="c" x="139" y="2.2" fill="#d0d0d0">15分钟</text>
<text class="c" x="182.8" y="2.2" fill="#d0d0d0">30分钟</text>
<text class="c" x="230.7" y="2.2" fill="#d0d0d0">60分钟</text>
<text class="c" x="279.6" y="2.2" fill="#e6c800">日线</text>
<text class="c" x="310.7" y="2.2" fill="#d0d0d0">周线</text>
<text class="c" x="344.9" y="2.2" fill="#d0d0d0">月线</text>
<text class="c" x="378.4" y="2.2" fill="#d0d0d0">多周期</text>
<text class="c" x="421.8" y="2.2" fill="#d0d0d0">更多</text>
<text class="c" x="823" y="2.2" fill="#d0d0d0">复权</text>
<text class="c" x="857.2" y="2.2" fill="#d0d0d0">叠加</text>
<text class="c" x="892.5" y="2.2" fill="#d0d0d0">多股</text>
<text class="c" x="927" y="2.2" fill="#d0d0d0">统计</text>
<text class="c" x="962.5" y="2.2" fill="#d0d0d0">画线</text>
<text class="c" x="998.3" y="2.2" fill="#d0d0d0">F10</text>
<text class="c" x="1032" y="2.2" fill="#d0d0d0">标记</text>
<path d="M452 -6l3 5l-3 5" stroke="#d0d0d0" fill="none"/>
<rect x="4.5" y="-6" width="11" height="8" rx="2" fill="none" stroke="#8a8a8a"/><rect x="11" y="-1" width="2.4" height="1.6" fill="#9a9a9a"/><rect x="0" y="1" width="1.5" height="1" fill="#8a8a8a"/>
</g>
</svg></body></html>
